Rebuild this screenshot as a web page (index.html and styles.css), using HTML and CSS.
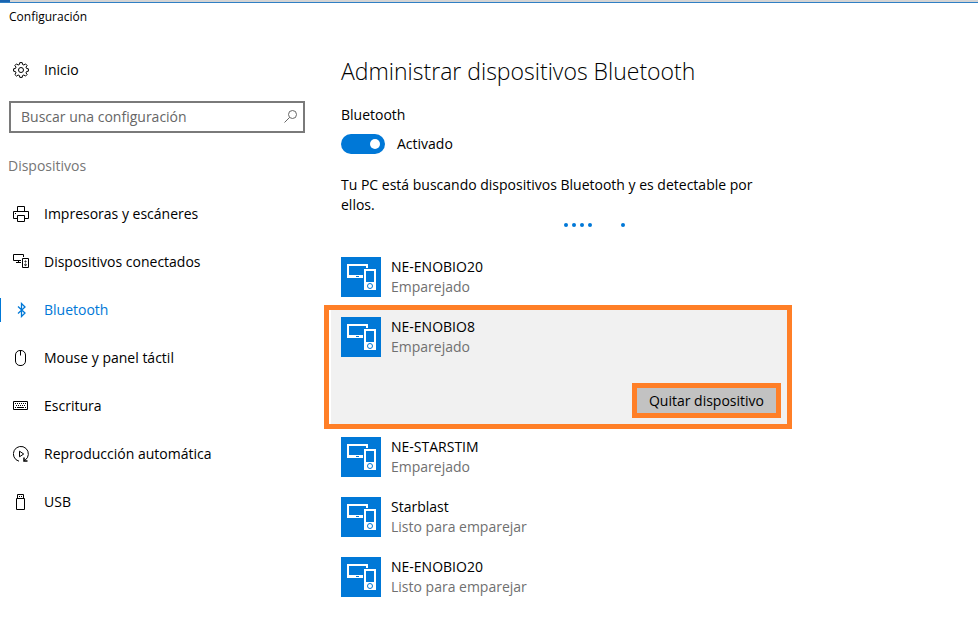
FILE: index.html
```
<!DOCTYPE html>
<html lang="es">
<head>
<meta charset="utf-8">
<title>Configuración</title>
<link rel="stylesheet" href="styles.css">
</head>
<body>
<svg class="sprite" aria-hidden="true">
  <symbol id="gear" viewBox="0 0 16 16"><path d="M6.8.6h2.4l.4 1.9 1.3.5 1.6-1.1 1.6 1.6L13 5.100l.5 1.300 1.900.4v2.400l-1.900.4-.5 1.300 1.100 1.600-1.600 1.600-1.600-1.100-1.300.5-.4 1.900H6.800l-.4-1.900-1.300-.5-1.600 1.100-1.600-1.600L3 10.900l-.5-1.300-1.900-.4V6.800l1.900-.4L3 5.100 1.900 3.500l1.600-1.600L5.100 3l1.300-.5z"/><circle cx="8" cy="8" r="2.500"/></symbol>
  <symbol id="printer" viewBox="0 0 16 16"><path d="M4.500 5.500v-5h7v5M4.500 12.500h-4v-7h15v7h-4M4.500 9.500h7v6h-7zM2 7.500h1"/></symbol>
  <symbol id="connected" viewBox="0 0 16 16"><path d="M10.500 3V.5H.5v6H8M5.500 6.500v2M3 8.500h5M9.500 4.500h6v9h-6z"/><circle cx="12.500" cy="7.500" r=".6"/><circle cx="12.500" cy="10.800" r=".8"/></symbol>
  <symbol id="bluetooth" viewBox="0 0 16 16"><path stroke-width="1.300" d="M5 4.500l7 6.500-3.500 3.500v-13L12 5l-7 6.500"/></symbol>
  <symbol id="mouse" viewBox="0 0 16 16"><rect x="2.500" y=".5" width="10" height="15" rx="4.500"/><path d="M7.500.5v5"/></symbol>
  <symbol id="keyboard" viewBox="0 0 16 16"><path d="M.5 3.500h14v8H.5z"/><path d="M2 5.500h11M3 7.500h10" stroke-dasharray="1 1"/><path d="M2 9.500h1M4 9.500h7M12 9.500h1"/></symbol>
  <symbol id="autoplay" viewBox="0 0 16 16"><path d="M6 15.200A7.500 7.500 0 1 1 12 14.200M6.500 5.200v5.600l4.200-2.800z"/><path d="M11 11.500v3.500h3.500" stroke-width="1.500"/></symbol>
  <symbol id="usb" viewBox="0 0 16 16"><path d="M4.500 4.500v-4h6v4M3.500 4.500h8v11h-8zM6 2.500h1M8 2.500h1"/></symbol>
  <symbol id="search" viewBox="0 0 16 16"><circle cx="9.500" cy="5.500" r="4"/><path d="M6.500 8.500L1.500 13.500"/></symbol>
  <symbol id="devices" viewBox="0 0 40 40"><path fill="#fff" fill-rule="evenodd" d="M6 7h21v4h-2V9H8v9h14v3H6z"/><path fill="#0078d7" d="M15 19h3v1h-3z"/><path fill="#fff" fill-rule="evenodd" d="M23 12h12v21H23zM25 14v11h8V14z"/><circle cx="29" cy="29" r="2.500" fill="none" stroke="#0078d7"/></symbol>
</svg>

<header class="titlebar">Configuración</header>

<div class="layout">
  <nav class="sidebar">
    <a class="item" href="#inicio"><svg class="icon"><use href="#gear"/></svg>Inicio</a>
    <label class="search">
      <input type="text" placeholder="Buscar una configuración" aria-label="Buscar una configuración">
      <svg class="icon"><use href="#search"/></svg>
    </label>
    <h2 class="group">Dispositivos</h2>
    <a class="item" href="#impresoras"><svg class="icon"><use href="#printer"/></svg>Impresoras y escáneres</a>
    <a class="item" href="#conectados"><svg class="icon"><use href="#connected"/></svg>Dispositivos conectados</a>
    <a class="item current" href="#bluetooth-page" aria-current="page"><svg class="icon"><use href="#bluetooth"/></svg>Bluetooth</a>
    <a class="item" href="#mouse-page"><svg class="icon"><use href="#mouse"/></svg>Mouse y panel táctil</a>
    <a class="item" href="#escritura"><svg class="icon"><use href="#keyboard"/></svg>Escritura</a>
    <a class="item" href="#reproduccion"><svg class="icon"><use href="#autoplay"/></svg>Reproducción automática</a>
    <a class="item" href="#usb-page"><svg class="icon"><use href="#usb"/></svg>USB</a>
  </nav>

  <main class="content">
    <h1>Administrar dispositivos Bluetooth</h1>
    <label class="caption" for="bt">Bluetooth</label>
    <div class="switch">
      <input type="checkbox" role="switch" id="bt" checked>
      <span>Activado</span>
    </div>
    <p class="status">Tu PC está buscando dispositivos Bluetooth y es detectable por ellos.</p>
    <div class="progress"><i></i><i></i><i></i><i></i><i class="trailing"></i></div>
    <ul class="devices">
      <li class="device"><svg class="tile"><use href="#devices"/></svg><div class="info"><span>NE-ENOBIO20</span><span class="state">Emparejado</span></div></li>
      <li class="device selected"><svg class="tile"><use href="#devices"/></svg><div class="info"><span>NE-ENOBIO8</span><span class="state">Emparejado</span></div><button class="remove" type="button">Quitar dispositivo</button></li>
      <li class="device"><svg class="tile"><use href="#devices"/></svg><div class="info"><span>NE-STARSTIM</span><span class="state">Emparejado</span></div></li>
      <li class="device"><svg class="tile"><use href="#devices"/></svg><div class="info"><span>Starblast</span><span class="state">Listo para emparejar</span></div></li>
      <li class="device"><svg class="tile"><use href="#devices"/></svg><div class="info"><span>NE-ENOBIO20</span><span class="state">Listo para emparejar</span></div></li>
    </ul>
  </main>
</div>
</body>
</html>
```

FILE: styles.css
```
* { box-sizing: border-box; }

body {
  margin: 0;
  background: #fff;
  color: #000;
  font: 14px/20px "Open Sans", "Noto Sans", sans-serif;
}

body::before {
  content: "";
  display: block;
  height: 2px;
  border-bottom: 1px solid #2f7fc4;
  background: linear-gradient(to right, #1a64b0 10px, #d4d4d4 10px);
}

.sprite { display: none; }

.titlebar {
  padding: 0 9px;
  font-size: 12px;
  line-height: 28px;
}

.layout { display: flex; padding-top: 15px; }

.sidebar { flex: 0 0 331px; }

.icon {
  flex: none;
  width: 16px;
  height: 16px;
  fill: none;
  stroke: currentColor;
}

.item {
  display: flex;
  align-items: center;
  gap: 15px;
  height: 48px;
  padding-left: 13px;
  color: inherit;
  text-decoration: none;
}

.current {
  color: #0078d7;
  background: linear-gradient(#0078d7, #0078d7) left center / 1px 24px no-repeat;
}

.search {
  display: flex;
  align-items: center;
  height: 32px;
  margin: 7px 26px 9px 9px;
  padding: 0 4px 0 10px;
  border: 2px solid #7a7a7a;
  color: #666;
}

.search input {
  flex: 1;
  min-width: 0;
  padding: 0;
  border: 0;
  outline: 0;
  background: none;
  font: inherit;
}

.search input::placeholder { color: #666; opacity: 1; }

.group {
  margin: 0;
  padding-left: 8px;
  color: #767676;
  font-size: 14px;
  font-weight: 400;
  line-height: 48px;
}

.content { flex: 0 1 460px; min-width: 0; }

h1 {
  margin: 9px 10px 18px;
  font-size: 23px;
  font-weight: 300;
  line-height: 32px;
}

.caption { display: block; margin: 0 10px; }

.switch {
  display: flex;
  align-items: center;
  gap: 12px;
  margin: 9px 10px 21px;
}

.switch input {
  appearance: none;
  display: flex;
  align-items: center;
  justify-content: flex-end;
  width: 44px;
  height: 20px;
  margin: 0;
  padding-right: 5px;
  border-radius: 10px;
  background: #0078d7;
}

.switch input::before {
  content: "";
  width: 10px;
  height: 10px;
  border-radius: 50%;
  background: #fff;
}

.status { margin: 0 10px; }

.progress {
  display: flex;
  gap: 4px;
  padding-left: 233px;
  margin: 8px 0 20px;
}

.progress i {
  width: 4px;
  height: 4px;
  border-radius: 50%;
  background: #0078d7;
}

.progress .trailing { margin-left: 25px; }

.devices { margin: 0; padding: 0; list-style: none; }

.device {
  display: flex;
  flex-wrap: wrap;
  gap: 10px;
  padding: 10px;
}

.tile { flex: none; width: 40px; height: 40px; background: #0078d7; }

.info {
  flex: 0 0 calc(100% - 50px);
  display: flex;
  flex-direction: column;
}

.state { color: #707070; }

.selected {
  position: relative;
  row-gap: 26px;
  padding-bottom: 9px;
  background: #f1f1f1;
}

.selected::after {
  content: "";
  position: absolute;
  inset: -2px -1px -2px -7px;
  border: 5px solid #ff7f27;
  pointer-events: none;
}

.remove {
  margin-left: auto;
  padding: 3px 12px 2px;
  border: 5px solid #ff7f27;
  background: #c2c2c2;
  color: #000;
  font: inherit;
}
```
